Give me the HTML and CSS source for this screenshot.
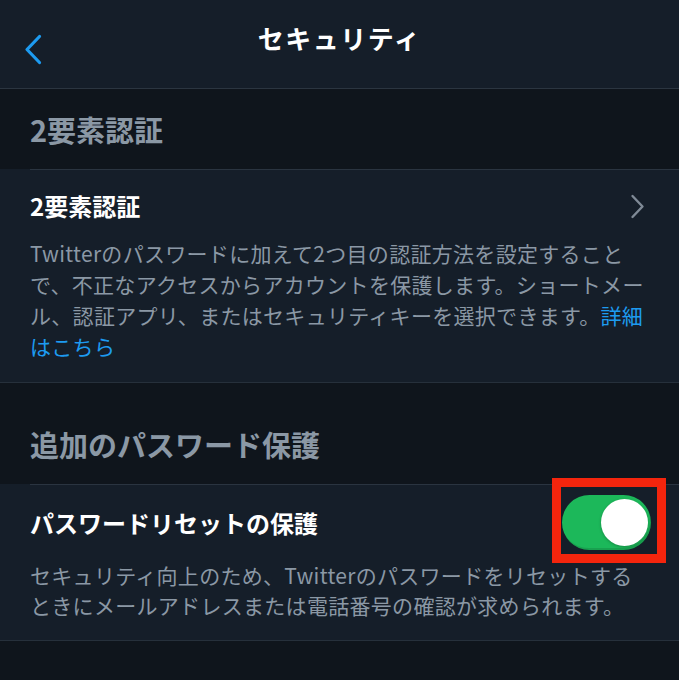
FILE: index.html
```html
<!DOCTYPE html>
<html lang="ja">
<head>
<meta charset="utf-8">
<title>セキュリティ</title>
<link rel="stylesheet" href="styles.css">
</head>
<body>
<div class="screen">
  <header class="nav">
    <button class="nav-back" aria-label="戻る">
      <svg width="20" height="31" viewBox="0 0 20 31"><path d="M16.5 2.5 L4 15.5 L16.5 28.5" fill="none" stroke="#1d9bf0" stroke-width="3.2" stroke-linecap="round" stroke-linejoin="round"/></svg>
    </button>
    <h1 class="nav-title">セキュリティ</h1>
    <span class="nav-spacer"></span>
  </header>

  <section class="group">
    <h2 class="group-title">2要素認証</h2>
    <div class="cell">
      <div class="cell-body">
        <div class="cell-head cell-head--link">
          <span class="cell-title">2要素認証</span>
          <svg class="chevron" width="15" height="25" viewBox="0 0 15 25"><path d="M2.5 2 L12.5 12.5 L2.5 23" fill="none" stroke="#7f8a96" stroke-width="2.4" stroke-linecap="round" stroke-linejoin="round"/></svg>
        </div>
        <p class="cell-desc">Twitterのパスワードに加えて2つ目の認証方法を設定すること<br>で、不正なアクセスからアカウントを保護します。ショートメー<br>ル、認証アプリ、またはセキュリティキーを選択できます。<a class="more" href="#">詳細<br>はこちら</a></p>
      </div>
    </div>
  </section>

  <section class="group group--spaced">
    <h2 class="group-title">追加のパスワード保護</h2>
    <div class="cell">
      <div class="cell-body">
        <div class="cell-head cell-head--switch">
          <span class="cell-title">パスワードリセットの保護</span>
          <span class="toggle is-on" role="switch" aria-checked="true"><span class="toggle-knob"></span></span>
        </div>
        <p class="cell-desc cell-desc--tight">セキュリティ向上のため、Twitterのパスワードをリセットする<br>ときにメールアドレスまたは電話番号の確認が求められます。</p>
      </div>
    </div>
  </section>
</div>
</body>
</html>
```

FILE: styles.css
```css
*, *::before, *::after { box-sizing: border-box; }

html, body {
  margin: 0;
  padding: 0;
  background: #0f151c;
}

body {
  font-family: "Noto Sans CJK JP", "Noto Sans", sans-serif;
  color: #ffffff;
}

.screen {
  width: 679px;
  min-height: 680px;
  background: #0f151c;
  overflow: hidden;
}

/* navigation bar */
.nav {
  height: 89px;
  background: #151e29;
  border-bottom: 1px solid #2b3540;
  display: grid;
  grid-template-columns: 1fr auto 1fr;
  align-items: start;
}

.nav-back {
  justify-self: start;
  margin: 34px 0 0 23px;
  padding: 0;
  border: 0;
  background: none;
  line-height: 0;
}

.nav-title {
  margin: 20px 0 0;
  font-size: 26px;
  line-height: 36px;
  font-weight: 700;
  letter-spacing: 1.5px;
  color: #ffffff;
}

/* grouped sections */
.group-title {
  margin: 0;
  padding: 22px 30px 22px;
  font-size: 29px;
  line-height: 36px;
  font-weight: 700;
  color: #8b98a5;
}

.group--spaced .group-title {
  padding-top: 43px;
}

.cell {
  background: #151e29;
  border-bottom: 1px solid #26303b;
}

.cell-body {
  margin-left: 30px;
  padding: 0 28px 20px 0;
  border-top: 1px solid #2a3440;
}

.cell-head {
  display: flex;
  align-items: center;
  justify-content: space-between;
}

.cell-head--link {
  padding-top: 20px;
}

.cell-head--switch {
  padding-top: 10px;
}

.cell-title {
  font-size: 24px;
  line-height: 32px;
  font-weight: 700;
  color: #ffffff;
}

.chevron {
  margin-right: 6px;
}

.cell-desc {
  margin: 16px 0 0;
  font-size: 21px;
  line-height: 31px;
  letter-spacing: 0.3px;
  color: #8b98a5;
  white-space: nowrap;
}

.cell-desc--tight {
  margin-top: 10px;
  line-height: 30px;
}

.more {
  color: #1d9bf0;
  text-decoration: none;
}

/* switch */
.toggle {
  position: relative;
  flex: none;
  width: 89px;
  height: 55px;
  border-radius: 28px;
  background: #1cb85a;
  box-shadow: inset -1px -2px 0 rgba(0, 0, 0, 0.12);
}

.toggle-knob {
  position: absolute;
  top: 4px;
  right: 3px;
  width: 47px;
  height: 47px;
  border-radius: 50%;
  background: #ffffff;
  box-shadow: 0 1px 3px rgba(0, 0, 0, 0.25);
}

/* highlight frame drawn over the switch */
.toggle::after {
  content: "";
  position: absolute;
  left: -10px;
  top: -17px;
  width: 114px;
  height: 85px;
  border: 9px solid #f4250d;
}
```
